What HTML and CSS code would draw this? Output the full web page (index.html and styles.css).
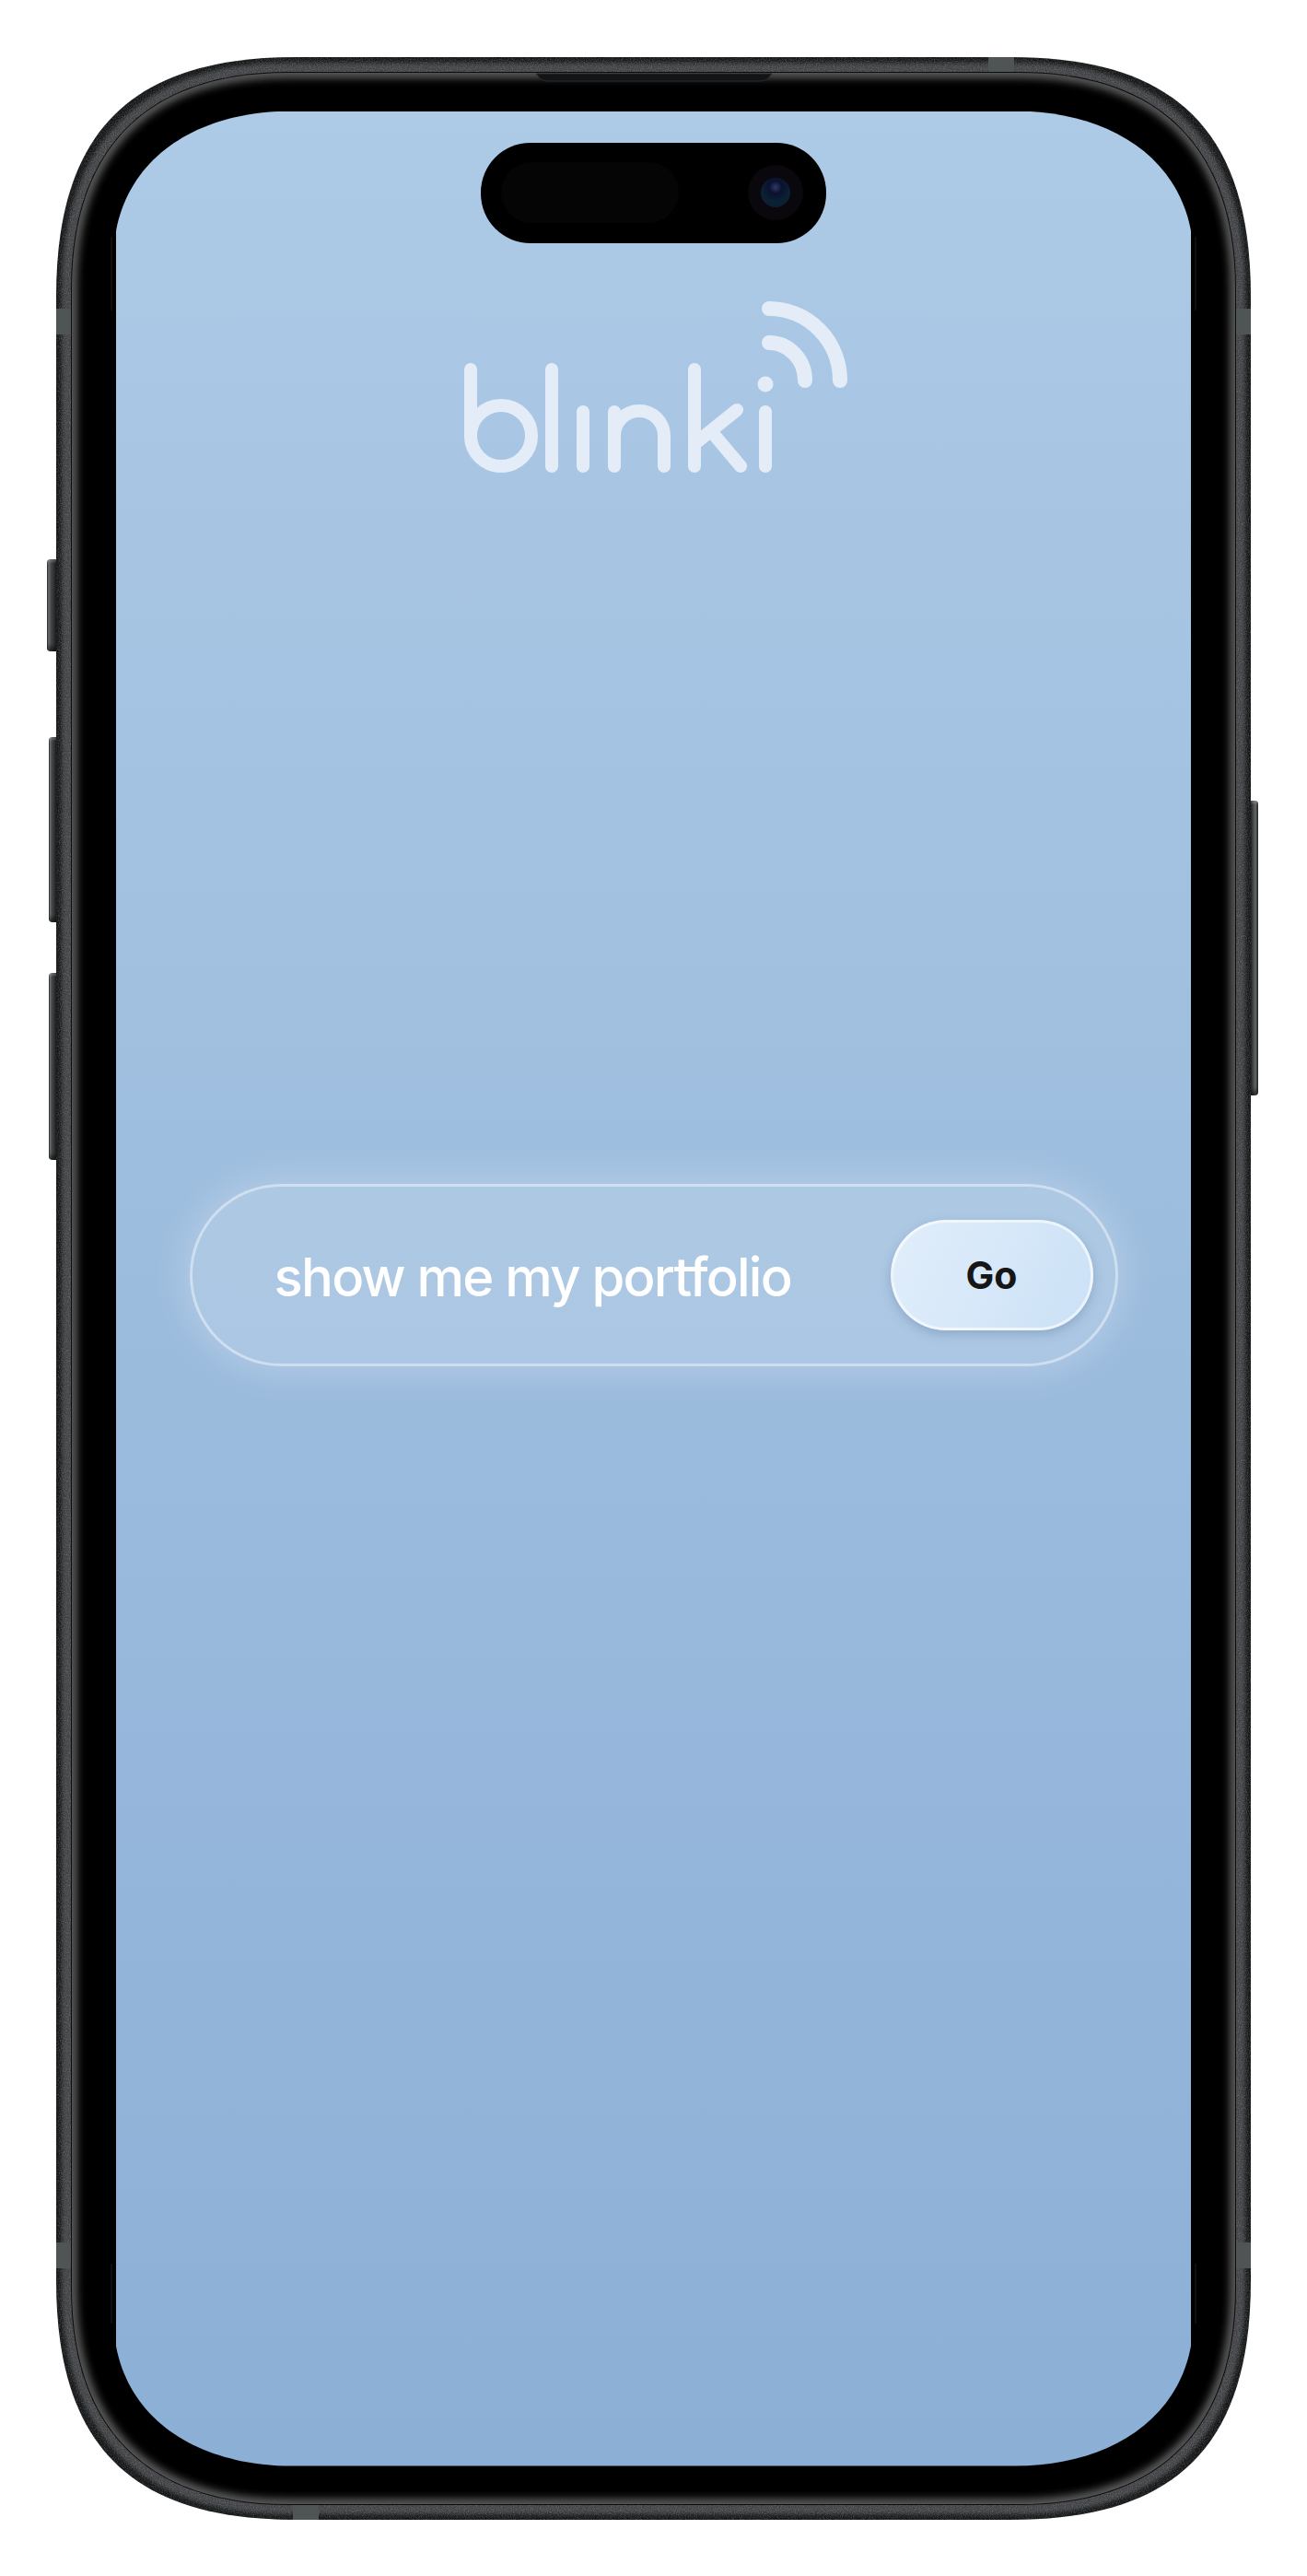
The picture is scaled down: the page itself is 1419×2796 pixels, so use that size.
FILE: index.html
```html
<!DOCTYPE html>
<html lang="en">
  <head>
    <meta charset="UTF-8" />
    <meta name="viewport" content="width=device-width, initial-scale=1.0" />
    <link rel="stylesheet" href="styles.css">
    <title>blinki</title>
  </head>

  <body>
    <div class="phone">
      <!-- side buttons -->
      <div class="side-btn mute"></div>
      <div class="side-btn vol-up"></div>
      <div class="side-btn vol-down"></div>
      <div class="side-btn power"></div>

      <!-- metal band and black bezel -->
      <svg class="frame" viewBox="0 0 1297 2673" aria-hidden="true">
        <defs>
          <path id="outer" d="M0 260C0 81 81 0 260 0H1037C1216 0 1297 81 1297 260V2413C1297 2592 1216 2673 1037 2673H260C81 2673 0 2592 0 2413Z" />
          <path id="inner" d="M17 252C17 99 99 17 252 17H1045C1198 17 1280 99 1280 252V2421C1280 2574 1198 2656 1045 2656H252C99 2656 17 2574 17 2421Z" />
          <clipPath id="clipOuter"><use href="#outer" /></clipPath>
          <clipPath id="clipInner"><use href="#inner" /></clipPath>
          <filter id="blur2"><feGaussianBlur stdDeviation="2" /></filter>
          <filter id="blur5"><feGaussianBlur stdDeviation="5" /></filter>
          <filter id="grain" x="0" y="0" width="100%" height="100%">
            <feTurbulence type="fractalNoise" baseFrequency="0.9" numOctaves="2" seed="4" />
            <feColorMatrix values="0 0 0 0 1  0 0 0 0 1  0 0 0 0 1  1.6 0 0 0 -0.6" />
          </filter>
        </defs>

        <use href="#outer" fill="#141516" />
        <g clip-path="url(#clipOuter)">
          <use href="#inner" fill="none" stroke="#3f4345" stroke-width="22" filter="url(#blur2)" />
          <rect width="1297" height="2673" filter="url(#grain)" opacity="0.26" />
          <!-- antenna bands -->
          <rect class="band" x="0" y="273" width="18" height="28" />
          <rect class="band" x="1279" y="273" width="18" height="28" />
          <rect class="band" x="0" y="2372" width="18" height="28" />
          <rect class="band" x="1279" y="2372" width="18" height="28" />
          <rect class="band" x="1012" y="0" width="28" height="17" />
          <rect class="band" x="257" y="2656" width="28" height="17" />
        </g>

        <use href="#inner" fill="#000" stroke="#0c0d0e" stroke-width="2" />
        <g clip-path="url(#clipInner)">
          <use href="#inner" fill="none" stroke="#6a6a6a" stroke-width="10" filter="url(#blur5)" />
          <path d="M521 18L526 24Q529 26 534 26H764Q769 26 772 24L777 18Z" fill="#131415" stroke="#2b2d2e" stroke-width="1" />
        </g>
        <!-- faint reflections next to the screen -->
        <path class="glint" d="M60 195V275M1237 195V275M60 2395V2460M1237 2395V2460" />
      </svg>

      <main class="screen">
        <div class="island">
          <div class="sensor"></div>
          <div class="camera"><div class="lens"></div></div>
        </div>

        <svg class="logo" viewBox="495 325 430 190" role="img" aria-label="blinki">
          <g fill="none" stroke="#e4edf7" stroke-width="14" stroke-linecap="round" stroke-linejoin="round">
            <path d="M511 401V473" />
            <circle cx="544" cy="473" r="33" />
            <path d="M599 401V506" />
            <path d="M633 447V506" />
            <path d="M667 447V506M667 473A27 27 0 0 1 721 473V506" />
            <path d="M754 401V506M754 482L800 445M772 468L804 506" />
            <path d="M831 447V506" />
            <path d="M835 372A39 41 0 0 1 874 413" stroke-width="16" />
            <path d="M835 335A77 78 0 0 1 912 413" stroke-width="16" />
          </g>
          <circle cx="831" cy="417" r="8.5" fill="#e4edf7" />
        </svg>

        <form class="prompt">
          <span class="prompt-text">show me my portfolio</span>
          <button type="button" class="go">Go</button>
        </form>
      </main>
    </div>
  </body>
</html>
```

FILE: styles.css
```css
html,
body {
  height: 100%;
}

body {
  margin: 0;
  background-color: #fff;
  display: flex;
  justify-content: center;
  align-items: center;
  overflow: hidden;
  font-family: Inter, "Liberation Sans", sans-serif;
}

.phone {
  position: relative;
  box-sizing: border-box;
  width: 1297px;
  height: 2673px;
  padding: 59px 65px 58px;
  flex: none;
}

.frame {
  position: absolute;
  top: 0;
  left: 0;
  width: 1297px;
  height: 2673px;
}

.band {
  fill: #4f5455;
}

.glint {
  fill: none;
  stroke: #fff;
  stroke-width: 1;
  opacity: 0.12;
}

.side-btn {
  position: absolute;
  box-sizing: border-box;
  border-radius: 4px 0 0 4px;
  background: linear-gradient(90deg, #1c1d1e 0, #757a7b 16%, #46494b 38%, #27292a 80%, #111 100%);
  box-shadow: inset 0 3px 2px rgba(255, 255, 255, 0.18), inset 0 -5px 4px rgba(0, 0, 0, 0.5);
}

.mute {
  left: -10px;
  top: 545px;
  width: 11px;
  height: 100px;
}

.vol-up {
  left: -8px;
  top: 738px;
  width: 9px;
  height: 201px;
}

.vol-down {
  left: -8px;
  top: 994px;
  width: 9px;
  height: 203px;
}

.power {
  right: -8px;
  top: 807px;
  width: 9px;
  height: 320px;
  border-radius: 0 4px 4px 0;
  background: linear-gradient(270deg, #1c1d1e 0, #686c6d 30%, #46494b 60%, #1a1b1c 100%);
}

.screen {
  position: relative;
  box-sizing: border-box;
  width: 1167px;
  height: 2556px;
  padding-top: 34px;
  display: flex;
  flex-direction: column;
  align-items: center;
  background: linear-gradient(180deg, #adcae6 0%, #8cafd6 100%);
  clip-path: path("M0 130C16 45 95 0 191 0H976C1072 0 1151 45 1167 130V2426C1151 2511 1072 2556 976 2556H191C95 2556 16 2511 0 2426Z");
}

.island {
  box-sizing: border-box;
  width: 375px;
  height: 109px;
  padding: 0 25px 0 22px;
  border-radius: 54px;
  background-color: #000;
  display: flex;
  justify-content: space-between;
  align-items: center;
  flex: none;
}

.sensor {
  width: 193px;
  height: 66px;
  border-radius: 33px;
  background-color: #050505;
}

.camera {
  width: 60px;
  height: 60px;
  border-radius: 50%;
  background-color: #0a070d;
  display: flex;
  justify-content: center;
  align-items: center;
}

.lens {
  width: 32px;
  height: 32px;
  border-radius: 50%;
  background: radial-gradient(circle at 50% 32%, #2f3a66 0, #0c1030 26%, #0a2232 58%, #12183a 100%);
}

.logo {
  width: 430px;
  height: 190px;
  margin-top: 61px;
  flex: none;
}

.prompt {
  box-sizing: border-box;
  width: 1008px;
  height: 198px;
  margin-top: 770px;
  padding: 0 24px 0 89px;
  border: 3px solid rgba(255, 255, 255, 0.42);
  border-radius: 99px;
  background-color: rgba(255, 255, 255, 0.17);
  box-shadow: 0 0 44px rgba(255, 255, 255, 0.3);
  display: flex;
  justify-content: space-between;
  align-items: center;
  flex: none;
}

.prompt-text {
  position: relative;
  top: 2px;
  color: #fff;
  font-size: 58px;
  font-weight: 500;
  letter-spacing: -1.75px;
}

.go {
  box-sizing: border-box;
  width: 220px;
  height: 120px;
  border: 3px solid rgba(255, 255, 255, 0.6);
  border-radius: 60px;
  background: linear-gradient(115deg, #e1eefb 0%, #cbe1f6 100%);
  box-shadow: 0 4px 12px rgba(60, 90, 130, 0.28);
  color: #161616;
  font-family: inherit;
  font-size: 41px;
  font-weight: 700;
}
```
